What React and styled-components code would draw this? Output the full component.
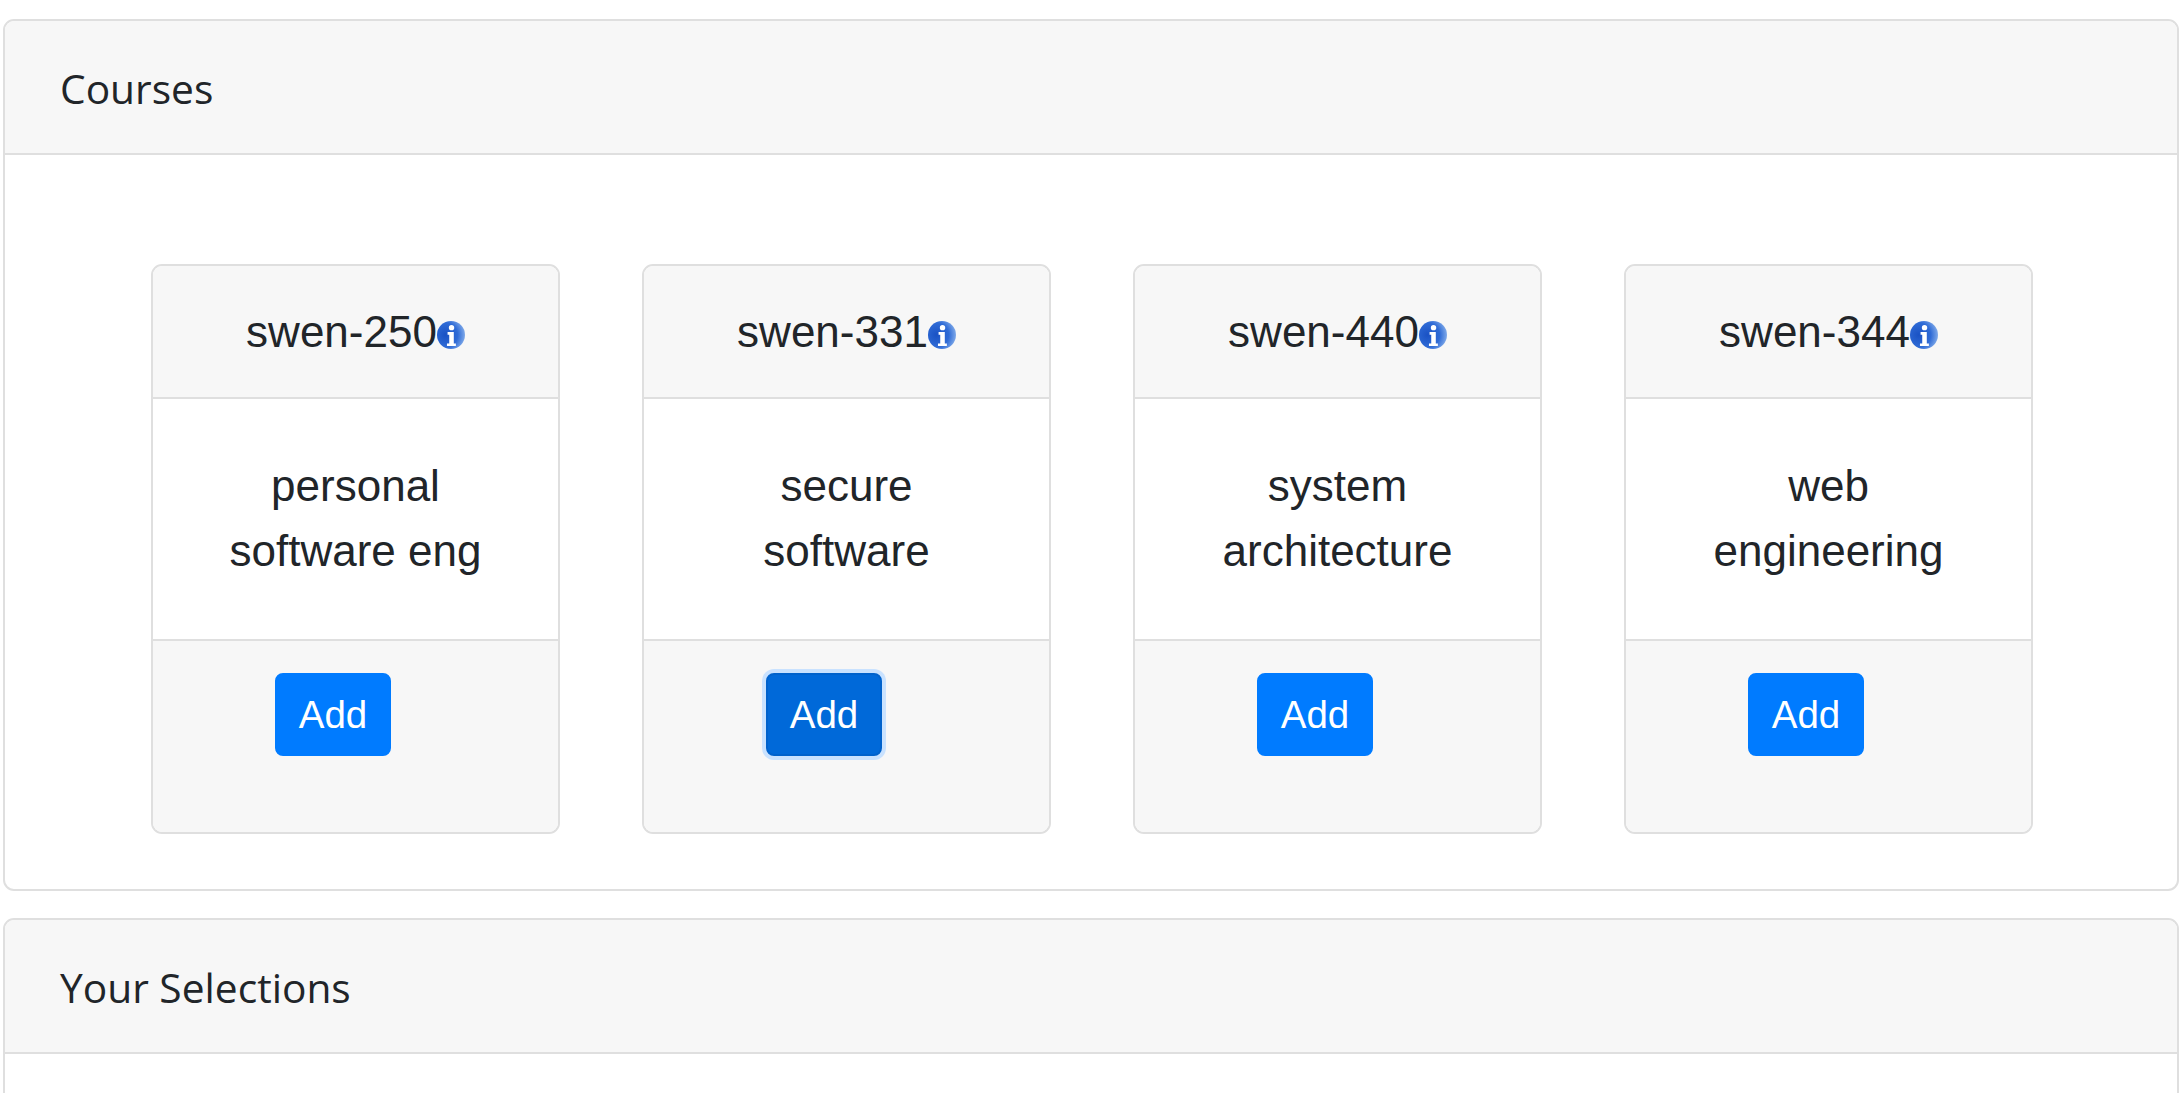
import React from 'react';
import styled, { createGlobalStyle } from 'styled-components';

const Global = createGlobalStyle`
  html, body {
    margin: 0;
    height: 1093px;
    overflow: hidden;
    background: #fff;
  }
  * { box-sizing: border-box; }
`

const Page = styled.div`
  padding: 19px 1px 0 3px;
  color: #212529;
  font-family: "Liberation Sans", Arial, sans-serif;
`
const Panel = styled.section`
  background: #fff;
  border: 2px solid #dfdfdf;
  border-radius: 11px;
  overflow: hidden;
  margin-bottom: 27px;
`
const PanelHeader = styled.div`
  height: 133.5px;
  padding: 3px 55px 0;
  display: flex;
  align-items: center;
  background: #f7f7f7;
  border-bottom: 2px solid #dfdfdf;
  font-family: "Open Sans", sans-serif;
  font-size: 40.7px;
`
const PanelBody = styled.div`
  padding: 109.5px 0 55px;
  min-height: ${p => p.$minHeight || 0}px;
`
const CardRow = styled.div`
  display: flex;
  justify-content: center;
  gap: 82px;
  padding-left: 2px;
`
const Card = styled.div`
  width: 409px;
  border: 2px solid #dfdfdf;
  border-radius: 11px;
  overflow: hidden;
  font-size: 44px;
  line-height: 65px;
  text-align: center;
`
const CardHeader = styled.div`
  height: 133px;
  padding: 33px 20px;
  background: #f7f7f7;
  border-bottom: 2px solid #dfdfdf;
  white-space: nowrap;
`
const CardBody = styled.div`
  height: 240px;
  padding: 54px 20px;
`
const CardFooter = styled.div`
  height: 193px;
  padding: 32px 0 0 122px;
  background: #f7f7f7;
  border-top: 2px solid #dfdfdf;
  text-align: left;
`
const AddButton = styled.button`
  display: block;
  width: 116px;
  height: 83px;
  padding: 0;
  color: #fff;
  font-family: "Liberation Sans", Arial, sans-serif;
  font-size: 38.5px;
  background: ${p => (p.$focused ? '#0069d9' : '#007bff')};
  border: 2px solid ${p => (p.$focused ? '#0062cc' : '#007bff')};
  border-radius: 8px;
  box-shadow: ${p => (p.$focused ? '0 0 0 4px #c9e2ff' : 'none')};
`
const InfoSvg = styled.svg`
  width: 28px;
  height: 28px;
  vertical-align: -2px;
`

function InfoIcon({ id }) {
  return (
    <InfoSvg viewBox="0 0 27 27">
      <defs>
        <radialGradient id={id} cx="0.3" cy="0.5" r="0.8">
          <stop offset="0" stopColor="#1a52c4" />
          <stop offset="0.55" stopColor="#2f6bd6" />
          <stop offset="1" stopColor="#9cc0f0" />
        </radialGradient>
      </defs>
      <circle cx="13.5" cy="13.5" r="13.5" fill={`url(#${id})`} />
      <circle cx="14" cy="6.4" r="2.6" fill="#fff" />
      <path d="M10.2 10.6h6v11h2v2.6H9.6v-2.6h2.2v-8.4H10.2z" fill="#fff" />
    </InfoSvg>
  );
}

const courses = [
  { code: 'swen-250', lines: ['personal', 'software eng'] },
  { code: 'swen-331', lines: ['secure', 'software'], focused: true },
  { code: 'swen-440', lines: ['system', 'architecture'] },
  { code: 'swen-344', lines: ['web', 'engineering'] },
];

export default function App() {
  return (
    <Page>
      <Global />
      <Panel>
        <PanelHeader>Courses</PanelHeader>
        <PanelBody>
          <CardRow>
            {courses.map(course => (
              <Card key={course.code}>
                <CardHeader>
                  {course.code}
                  <InfoIcon id={`info-${course.code}`} />
                </CardHeader>
                <CardBody>
                  {course.lines[0]}
                  <br />
                  {course.lines[1]}
                </CardBody>
                <CardFooter>
                  <AddButton $focused={course.focused}>Add</AddButton>
                </CardFooter>
              </Card>
            ))}
          </CardRow>
        </PanelBody>
      </Panel>
      <Panel>
        <PanelHeader>Your Selections</PanelHeader>
        <PanelBody $minHeight={300} />
      </Panel>
    </Page>
  );
}
